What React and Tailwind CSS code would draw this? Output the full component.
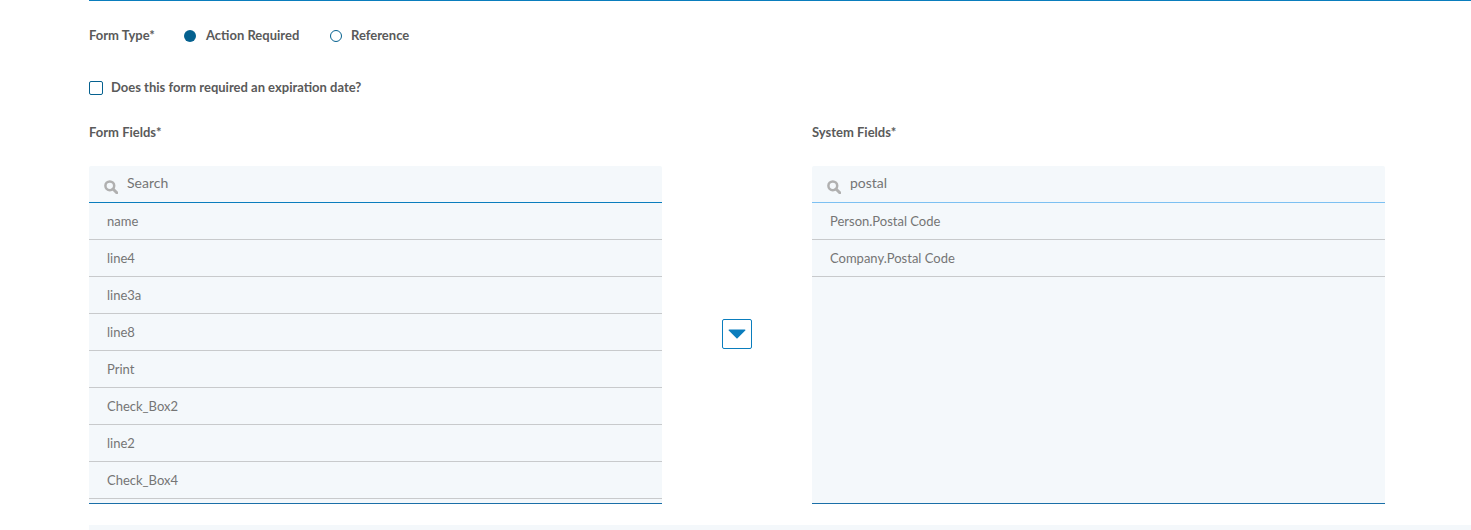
import React from "react";

const Search = () => (
  <svg width="14" height="14" viewBox="0 0 14 14" fill="none" className="shrink-0">
    <circle cx="5.8" cy="5.8" r="4.4" stroke="#b0b0b0" strokeWidth="2.5" />
    <path d="M9 9l3.8 3.8" stroke="#b0b0b0" strokeWidth="3" strokeLinecap="round" />
  </svg>
);

const Row = ({ children }) => (
  <div className="h-[37px] shrink-0 flex items-center pl-[18px] pt-[2px] border-b border-[#c8cacc] text-[13px] text-[#757575]">{children}</div>
);

const Panel = ({ value, placeholder, line, items }) => (
  <div className="w-[573px] h-[338px] bg-[#f4f8fb] rounded-t-[2px] flex flex-col overflow-hidden border-b border-[#1a6fa8]">
    <div className={`h-[37px] shrink-0 flex items-center pl-[15px] border-b ${line}`}>
      <span className="mt-[5px]"><Search /></span>
      <span className="ml-[9px] text-[14px] mb-[4px] text-[#757575]">{value || placeholder}</span>
    </div>
    {items.map((t) => <Row key={t}>{t}</Row>)}
  </div>
);

const labelClass = "text-[13px] font-bold text-[#5a5a5a]";

export default function App() {
  return (
    <div className="w-[1471px] h-[530px] bg-white overflow-hidden pl-[89px] font-['Lato','Noto_Sans',sans-serif]">
      <div className="h-px bg-[#0a7dbd]" />
      <div className={`h-[69px] flex items-center ${labelClass}`}>
        <span className="w-[95px]">Form Type*</span>
        <span className="w-3 h-3 rounded-full bg-[#05618f]" />
        <span className="ml-[10px] w-[124px] whitespace-nowrap">Action Required</span>
        <span className="w-3 h-3 rounded-full border border-[#05618f] bg-white" />
        <span className="ml-[9px]">Reference</span>
      </div>
      <div className={`mt-[9px] h-[17px] flex items-center ${labelClass}`}>
        <span className="w-[14px] h-[14px] rounded-[2px] border border-[#05618f] bg-white" />
        <span className="ml-2">Does this form required an expiration date?</span>
      </div>
      <div className={`mt-[28px] flex h-[17px] items-center ${labelClass}`}>
        <span className="w-[723px]">Form Fields*</span>
        <span>System Fields*</span>
      </div>
      <div className="mt-[25px] flex items-center">
        <Panel
          placeholder="Search"
          line="border-[#0a7dbd]"
          items={["name", "line4", "line3a", "line8", "Print", "Check_Box2", "line2", "Check_Box4"]}
        />
        <div className="w-[150px] flex justify-center pb-[2px]">
          <button className="w-[30px] h-[30px] rounded-[2px] border border-[#0a7dbd] bg-white flex items-center justify-center">
            <svg width="18" height="10" viewBox="0 0 18 10"><path d="M0.5 1.2Q0.5 0.5 1.2 0.5H16.8Q17.5 0.5 17.5 1.2L9 9.8Z" fill="#0a7dbd" /></svg>
          </button>
        </div>
        <Panel
          value="postal"
          line="border-[#7cc0f2]"
          items={["Person.Postal Code", "Company.Postal Code"]}
        />
      </div>
      <div className="mt-[21px] h-[5px] bg-[#f4f8fb]" />
    </div>
  );
}
